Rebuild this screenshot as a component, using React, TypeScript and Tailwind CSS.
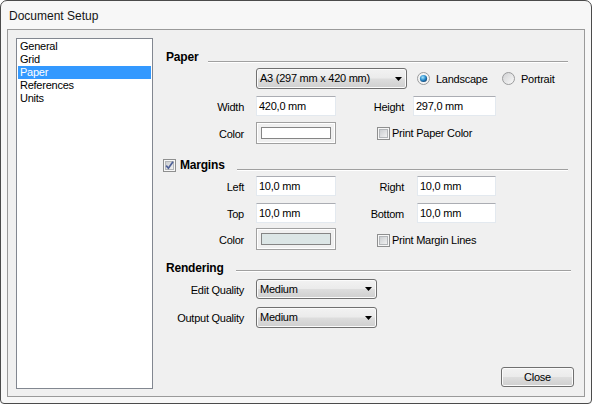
import type { ReactNode } from 'react';

const BUTTON_FACE =
  'rounded-[3px] border border-[#707070] bg-[linear-gradient(#f2f2f2_0%,#ebebeb_48%,#dddddd_52%,#cfcfcf_100%)] shadow-[inset_0_0_0_1px_#fbfbfb]';

const NAV_ITEMS = ['General', 'Grid', 'Paper', 'References', 'Units'];

/** Win7 style drop-down list (looks like a push button with a down arrow). */
function Combo({ value, className }: { value: string; className: string }) {
  return (
    <div className={`flex items-center justify-between pl-[3px] pr-[4px] ${BUTTON_FACE} ${className}`}>
      <span>{value}</span>
      <svg width="7" height="4" viewBox="0 0 7 4" className="shrink-0">
        <path d="M0 0h7L3.5 4z" fill="#000" />
      </svg>
    </div>
  );
}

function TextBox({ value, className }: { value: string; className: string }) {
  return (
    <div
      className={`flex h-[20px] items-center border border-[#e3e9ef] border-t-[#abadb3] bg-white pl-[2px] ${className}`}
    >
      {value}
    </div>
  );
}

function ColorButton({ fill }: { fill: string }) {
  return (
    <div className="ml-[12px] flex h-[22px] w-[80px] items-center justify-center border border-[#a0a0a0] shadow-[inset_0_0_0_1px_#ffffff]">
      <div className="h-[12px] w-[70px] border border-[#858585]" style={{ background: fill }} />
    </div>
  );
}

function Radio({ id, checked }: { id: string; checked?: boolean }) {
  return (
    <svg width="13" height="13" viewBox="0 0 13 13" className="shrink-0">
      <defs>
        <linearGradient id={`${id}-bg`} x1="0" y1="0" x2="1" y2="1">
          <stop offset="0" stopColor="#cfd0d2" />
          <stop offset="1" stopColor="#fbfbfb" />
        </linearGradient>
        <radialGradient id={`${id}-dot`} cx="0.4" cy="0.35" r="0.7">
          <stop offset="0" stopColor="#a8e6fb" />
          <stop offset="0.55" stopColor="#2b8ccd" />
          <stop offset="1" stopColor="#0f3d6a" />
        </radialGradient>
      </defs>
      <circle cx="6.5" cy="6.5" r="6" fill={checked ? '#f4f4f4' : `url(#${id}-bg)`} stroke="#9a9b9c" />
      {checked && <circle cx="6.5" cy="6.5" r="3.6" fill={`url(#${id}-dot)`} />}
    </svg>
  );
}

function CheckBox({ id, checked }: { id: string; checked?: boolean }) {
  return (
    <svg width="13" height="13" viewBox="0 0 13 13" className="shrink-0">
      <defs>
        <linearGradient id={`${id}-bg`} x1="0" y1="0" x2="1" y2="1">
          <stop offset="0" stopColor="#c9cccf" />
          <stop offset="1" stopColor="#f3f3f3" />
        </linearGradient>
      </defs>
      <rect x="0.5" y="0.5" width="12" height="12" fill="#f7f7f7" stroke="#8e8f8f" />
      <rect x="2.5" y="2.5" width="8" height="8" fill={`url(#${id}-bg)`} stroke="#b3b6b9" />
      {checked && (
        <path d="M3.2 6.6 L5.4 9.2 L10 2.8" fill="none" stroke="#4f6198" strokeWidth="1.7" />
      )}
    </svg>
  );
}

function Label({ children, className = 'w-[78px]' }: { children: ReactNode; className?: string }) {
  return <span className={`shrink-0 pt-[2px] text-right ${className}`}>{children}</span>;
}

function Rule({ className }: { className: string }) {
  return <div className={`h-[2px] flex-1 border-y border-t-[#a0a0a0] border-b-white ${className}`} />;
}

export default function App() {
  return (
    <div className="h-[404px] w-[592px] bg-white font-['Liberation_Sans',Arial,sans-serif] text-[11px] tracking-[-0.25px] text-black">
      <div className="flex h-full w-full flex-col rounded-t-[7px] rounded-b-[4px] border border-[#4b4b4b] bg-[#f7f7f7]">
        {/* title bar */}
        <div className="flex h-[28px] items-center pl-[8px] pt-[2px] text-[12px] tracking-normal text-[#151515]">
          Document Setup
        </div>

        <div className="mx-[6px] flex h-[368px] border border-[#9a9a9a] bg-[#f0f0f0]">
          {/* category list */}
          <div className="mb-[7px] ml-[8px] mt-[8px] w-[137px] border border-[#828790] bg-white p-[1px]">
            {NAV_ITEMS.map((item) => (
              <div
                key={item}
                className={`h-[13px] pl-[2px] leading-[13px] ${item === 'Paper' ? 'bg-[#3399ff] text-white' : ''}`}
              >
                {item}
              </div>
            ))}
          </div>

          <div className="flex flex-1 flex-col pl-[13px]">
            {/* Paper */}
            <div className="mt-[20px] flex h-[14px] w-[402px] items-start">
              <span className="text-[12px] font-bold leading-[14px] tracking-[-0.2px]">Paper</span>
              <Rule className="ml-[10px] mt-[11px]" />
            </div>
            <div className="mt-[4px] flex h-[21px] items-center">
              <Combo value="A3 (297 mm x 420 mm)" className="ml-[90px] h-[21px] w-[151px]" />
              <span className="ml-[10px]">
                <Radio id="land" checked />
              </span>
              <span className="ml-[6px] w-[66px] pt-[2px]">Landscape</span>
              <Radio id="port" />
              <span className="ml-[6px] pt-[2px]">Portrait</span>
            </div>
            <div className="mt-[7px] flex h-[20px] items-center">
              <Label>Width</Label>
              <TextBox value="420,0 mm" className="ml-[12px] w-[80px]" />
              <Label className="w-[68px]">Height</Label>
              <TextBox value="297,0 mm" className="ml-[9px] w-[83px]" />
            </div>
            <div className="mt-[6px] flex h-[22px] items-center">
              <Label>Color</Label>
              <ColorButton fill="#ffffff" />
              <span className="ml-[41px]">
                <CheckBox id="ppc" />
              </span>
              <span className="ml-[2px]">Print Paper Color</span>
            </div>

            {/* Margins */}
            <div className="-ml-[3px] mt-[14px] flex h-[14px] w-[405px] items-start">
              <span className="mt-[1px]">
                <CheckBox id="mrg" checked />
              </span>
              <span className="ml-[4px] text-[12px] font-bold leading-[14px] tracking-[-0.2px]">Margins</span>
              <Rule className="ml-[12px] mt-[11px]" />
            </div>
            <div className="mt-[4px] flex h-[20px] items-center">
              <Label>Left</Label>
              <TextBox value="10,0 mm" className="ml-[12px] w-[80px]" />
              <Label className="w-[68px]">Right</Label>
              <TextBox value="10,0 mm" className="ml-[13px] w-[79px]" />
            </div>
            <div className="mt-[7px] flex h-[20px] items-center">
              <Label>Top</Label>
              <TextBox value="10,0 mm" className="ml-[12px] w-[80px]" />
              <Label className="w-[68px]">Bottom</Label>
              <TextBox value="10,0 mm" className="ml-[13px] w-[79px]" />
            </div>
            <div className="mt-[5px] flex h-[22px] items-center">
              <Label>Color</Label>
              <ColorButton fill="#dce6e6" />
              <span className="ml-[41px] mt-[3px]">
                <CheckBox id="pml" />
              </span>
              <span className="ml-[2px] mt-[3px]">Print Margin Lines</span>
            </div>

            {/* Rendering */}
            <div className="mt-[11px] flex h-[14px] w-[405px] items-start">
              <span className="text-[12px] font-bold leading-[14px] tracking-[-0.2px]">Rendering</span>
              <Rule className="ml-[12px] mt-[9px]" />
            </div>
            <div className="mt-[4px] flex h-[20px] items-center">
              <Label>Edit Quality</Label>
              <Combo value="Medium" className="ml-[12px] h-[20px] w-[121px]" />
            </div>
            <div className="mt-[8px] flex h-[21px] items-center">
              <Label>Output Quality</Label>
              <Combo value="Medium" className="ml-[12px] h-[21px] w-[121px]" />
            </div>

            <div className="mt-auto mb-[9px] mr-[10px] flex justify-end">
              <button
                type="button"
                className={`flex h-[20px] w-[73px] items-center justify-center ${BUTTON_FACE}`}
              >
                Close
              </button>
            </div>
          </div>
        </div>
      </div>
    </div>
  );
}
